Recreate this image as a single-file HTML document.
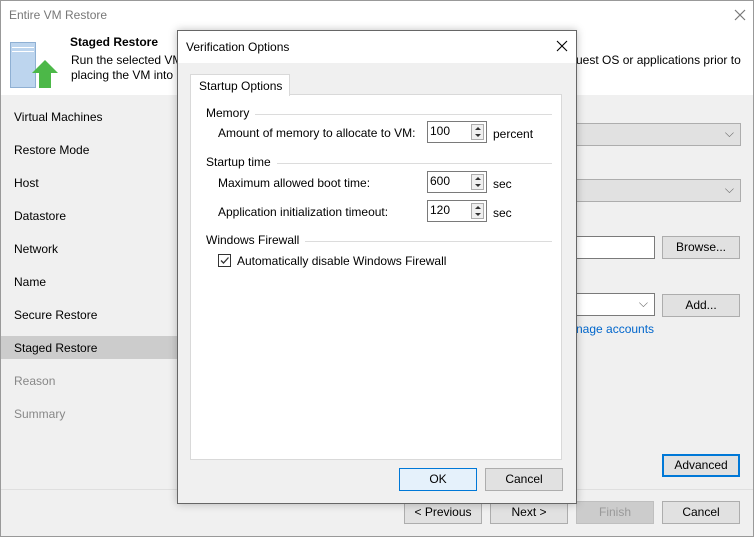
<!DOCTYPE html>
<html><head><style>
*{margin:0;padding:0;box-sizing:border-box}
body{width:754px;height:537px;position:relative;overflow:hidden;font-family:"Liberation Sans",sans-serif;font-size:12px;color:#000;background:#f0f0f0}
.a{position:absolute}
.btn{position:absolute;background:#e1e1e1;border:1px solid #adadad;text-align:center;line-height:21px;height:23px}
.nav{position:absolute;left:14px}
.sp{position:absolute;width:60px;height:22px;background:#fff;border:1px solid #7a7a7a;padding:2px 0 0 2px}
.sp .u{position:absolute;right:2px;top:2px;width:13px;height:16px;border:1px solid #acacac;background:#f0f0f0}
.sp .u:before{content:"";position:absolute;left:3px;top:2px;border:3px solid transparent;border-bottom:3px solid #333;border-top:0}
.sp .u:after{content:"";position:absolute;left:3px;top:9px;border:3px solid transparent;border-top:3px solid #333;border-bottom:0}
.sec{position:absolute;left:206px;width:346px;height:1px}
.sec span{background:#fff;padding-right:6px;position:relative;z-index:1}
.sec i{position:absolute;left:0;right:0;top:8px;border-top:1px solid #dcdcdc}
</style></head><body>
<div class="a" style="left:0;top:0;width:754px;height:537px;border:1px solid #999"></div>
<div class="a" style="left:1px;top:1px;width:752px;height:94px;background:#fff"></div>
<div class="a" style="left:9px;top:8px;color:#777;font-size:12px">Entire VM Restore</div>
<svg class="a" style="left:734px;top:9px" width="12" height="12"><path d="M1 1L11 11M11 1L1 11" stroke="#777" stroke-width="1.2"/></svg>
<div class="a" style="left:10px;top:42px;width:26px;height:46px;background:#bdd5ee;border:1px solid #8fb0d3"></div>
<div class="a" style="left:12px;top:47px;width:22px;border-top:1px solid #fff"></div>
<div class="a" style="left:12px;top:51px;width:22px;border-top:1px solid #fff"></div>
<svg class="a" style="left:30px;top:58px" width="30" height="32"><path d="M15 2 L28 15 L21 15 L21 30 L9 30 L9 15 L2 15 Z" fill="#4cb848"/></svg>
<div class="a" style="left:70px;top:35px;font-weight:bold">Staged Restore</div>
<div class="a" style="left:71px;top:53px;line-height:15px">Run the selected VM<br>placing the VM into</div>
<div class="a" style="left:576px;top:53px">uest OS or applications prior to</div>
<div class="nav" style="top:110px">Virtual Machines</div>
<div class="nav" style="top:143px">Restore Mode</div>
<div class="nav" style="top:176px">Host</div>
<div class="nav" style="top:209px">Datastore</div>
<div class="nav" style="top:242px">Network</div>
<div class="nav" style="top:275px">Name</div>
<div class="nav" style="top:308px">Secure Restore</div>
<div class="a" style="left:1px;top:336px;width:177px;height:23px;background:#cccccc"></div>
<div class="nav" style="top:341px">Staged Restore</div>
<div class="nav" style="top:374px;color:#888">Reason</div>
<div class="nav" style="top:407px;color:#888">Summary</div>
<div class="a" style="left:576px;top:123px;width:165px;height:23px;background:#e1e1e1;border:1px solid #adadad"><span class="a" style="right:6px;top:2px;color:#666">⌵</span></div>
<div class="a" style="left:576px;top:179px;width:165px;height:23px;background:#e1e1e1;border:1px solid #adadad"><span class="a" style="right:6px;top:2px;color:#666">⌵</span></div>
<div class="a" style="left:576px;top:236px;width:79px;height:23px;background:#fff;border:1px solid #7a7a7a"></div>
<div class="btn" style="left:662px;top:236px;width:78px">Browse...</div>
<div class="a" style="left:576px;top:293px;width:79px;height:23px;background:#fff;border:1px solid #7a7a7a"><span class="a" style="right:6px;top:2px;color:#666">⌵</span></div>
<div class="btn" style="left:662px;top:294px;width:78px">Add...</div>
<div class="a" style="left:576px;top:322px;color:#0066cc">nage accounts</div>
<div class="btn" style="left:662px;top:454px;width:78px;border:2px solid #0078d7;line-height:19px">Advanced</div>
<div class="a" style="left:1px;top:489px;width:752px;border-top:1px solid #dfdfdf"></div>
<div class="btn" style="left:404px;top:501px;width:78px">&lt; Previous</div>
<div class="btn" style="left:490px;top:501px;width:78px">Next &gt;</div>
<div class="btn" style="left:576px;top:501px;width:78px;background:#ccc;border-color:#bfbfbf;color:#999">Finish</div>
<div class="btn" style="left:662px;top:501px;width:78px">Cancel</div>

<div class="a" style="left:177px;top:30px;width:400px;height:474px;background:#f0f0f0;border:1px solid #666;box-shadow:0 0 8px rgba(0,0,0,.25)"></div>
<div class="a" style="left:178px;top:31px;width:398px;height:32px;background:#fff"></div>
<div class="a" style="left:186px;top:40px">Verification Options</div>
<svg class="a" style="left:556px;top:40px" width="12" height="12"><path d="M1 1L11 11M11 1L1 11" stroke="#000" stroke-width="1.1"/></svg>
<div class="a" style="left:190px;top:94px;width:372px;height:366px;background:#fff;border:1px solid #d9d9d9"></div>
<div class="a" style="left:190px;top:74px;width:100px;height:22px;background:#fff;border:1px solid #d9d9d9;border-bottom:none;padding:4px 0 0 8px">Startup Options</div>
<div class="sec" style="top:106px"><span>Memory</span><i></i></div>
<div class="a" style="left:218px;top:126px">Amount of memory to allocate to VM:</div>
<div class="sp" style="left:427px;top:121px">100<div class="u"></div></div>
<div class="a" style="left:493px;top:127px">percent</div>
<div class="sec" style="top:155px"><span>Startup time</span><i></i></div>
<div class="a" style="left:218px;top:176px">Maximum allowed boot time:</div>
<div class="sp" style="left:427px;top:171px">600<div class="u"></div></div>
<div class="a" style="left:493px;top:177px">sec</div>
<div class="a" style="left:218px;top:205px">Application initialization timeout:</div>
<div class="sp" style="left:427px;top:200px">120<div class="u"></div></div>
<div class="a" style="left:493px;top:206px">sec</div>
<div class="sec" style="top:233px"><span>Windows Firewall</span><i></i></div>
<div class="a" style="left:218px;top:254px;width:13px;height:13px;border:1px solid #333;background:#fff"><svg width="11" height="11" style="position:absolute;left:0;top:0"><path d="M2 5.5 L4.5 8 L9.5 2.5" stroke="#333" stroke-width="1.3" fill="none"/></svg></div>
<div class="a" style="left:237px;top:254px">Automatically disable Windows Firewall</div>
<div class="btn" style="left:399px;top:468px;width:78px;background:#e5f1fb;border-color:#0078d7">OK</div>
<div class="btn" style="left:485px;top:468px;width:78px">Cancel</div>
</body></html>
